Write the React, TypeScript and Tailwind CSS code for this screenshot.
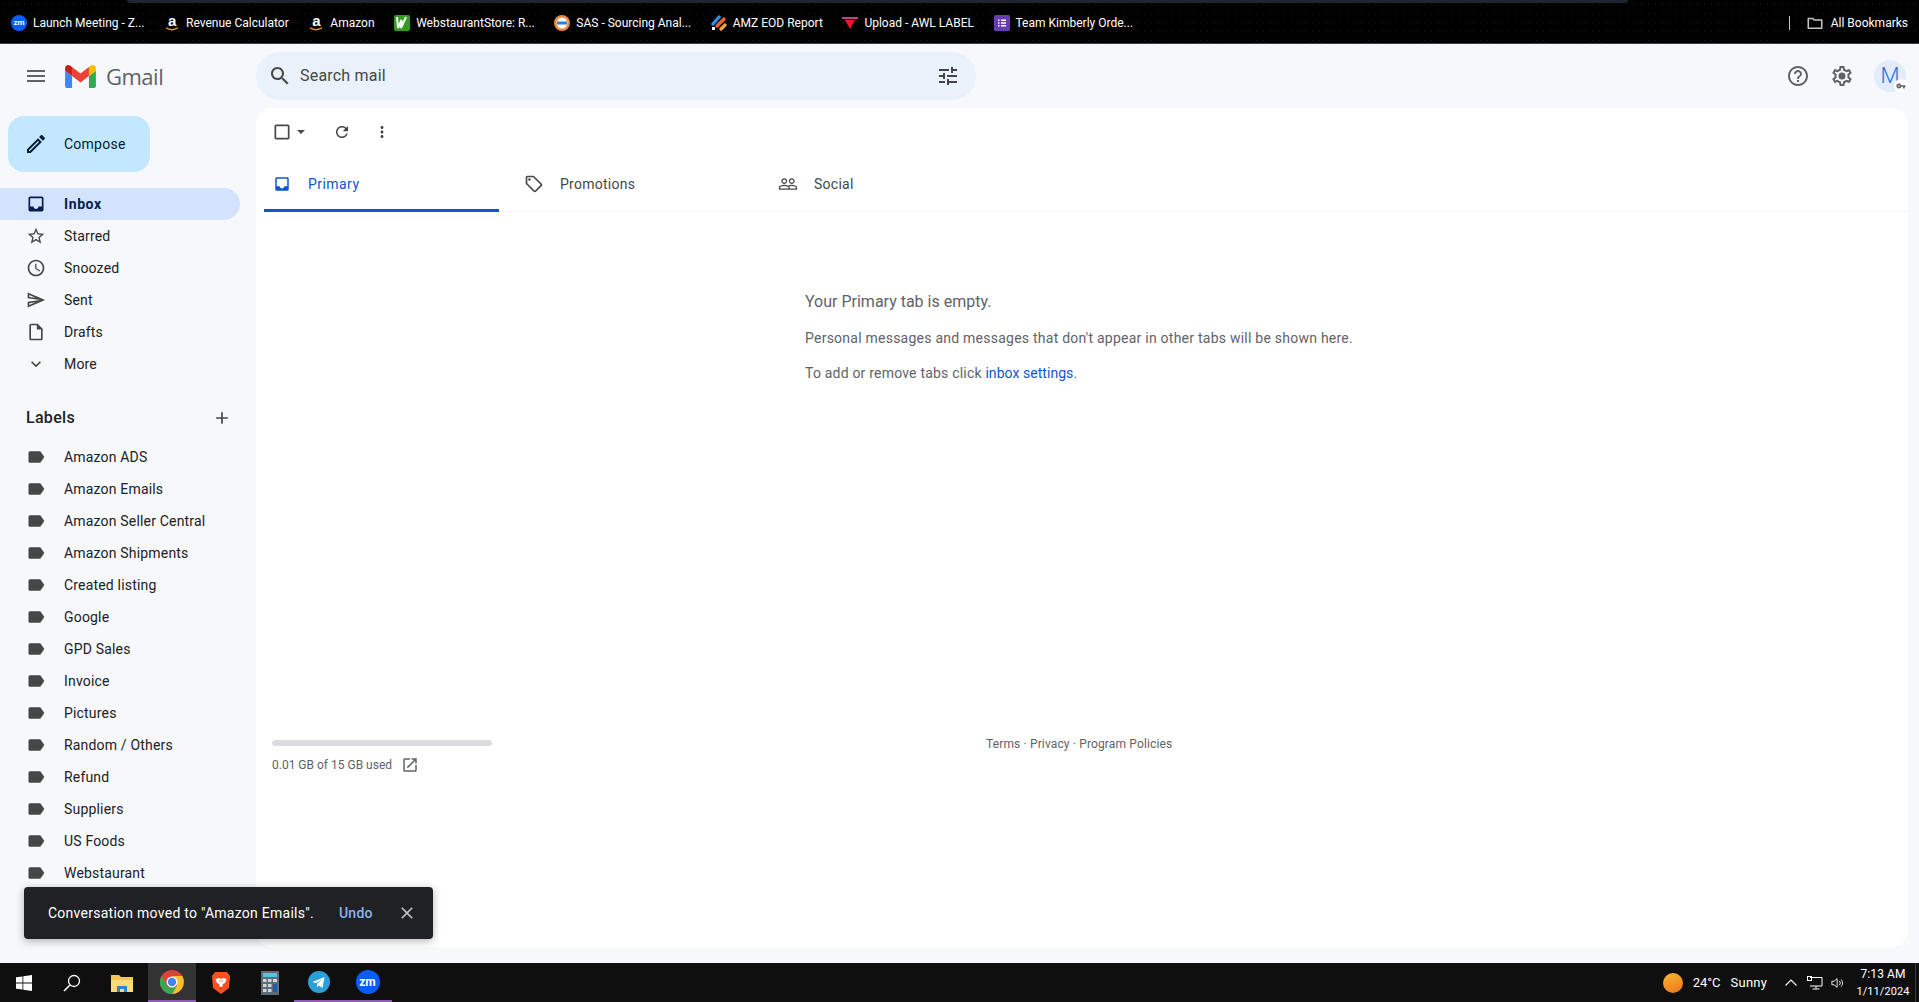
import React from "react";

const ICONS = {
  inbox: "M19 3H5c-1.1 0-2 .9-2 2v14c0 1.1.9 2 2 2h14c1.1 0 2-.9 2-2V5c0-1.1-.9-2-2-2zm0 12h-4c0 1.66-1.35 3-3 3s-3-1.34-3-3H5V5h14v10z",
  star: "M22 9.24l-7.19-.62L12 2 9.19 8.63 2 9.24l5.46 4.73L5.82 21 12 17.27 18.18 21l-1.63-7.03L22 9.24zM12 15.4l-3.76 2.27 1-4.28-3.32-2.88 4.38-.38L12 6.1l1.71 4.04 4.38.38-3.32 2.88 1 4.28L12 15.4z",
  clock: "M11.99 2C6.47 2 2 6.48 2 12s4.47 10 9.99 10C17.52 22 22 17.52 22 12S17.52 2 11.99 2zM12 20c-4.42 0-8-3.58-8-8s3.58-8 8-8 8 3.58 8 8-3.58 8-8 8zm.5-13H11v6l5.25 3.15.75-1.23-4.5-2.67z",
  send: "M4.01 6.03l7.51 3.22-7.52-1 .01-2.22m7.5 8.72L4 17.97v-2.22l7.51-1M2.01 3L2 10l15 2-15 2 .01 7L23 12 2.01 3z",
  draft: "M14 2H6c-1.1 0-2 .9-2 2v16c0 1.1.9 2 2 2h12c1.1 0 2-.9 2-2V8l-6-6zm4 18H6V4h7v5h5v11z",
  chevron: "M7.41 8.59 12 13.17l4.59-4.58L18 10l-6 6-6-6z",
  label: "M17.63 5.84C17.27 5.33 16.67 5 16 5L5 5.01C3.9 5.01 3 5.9 3 7v10c0 1.1.9 1.99 2 1.99L16 19c.67 0 1.27-.33 1.63-.84L22 12l-4.37-6.16z",
  search: "M15.5 14h-.79l-.28-.27C15.41 12.59 16 11.11 16 9.5 16 5.91 13.09 3 9.5 3S3 5.91 3 9.5 5.91 16 9.5 16c1.61 0 3.09-.59 4.23-1.57l.27.28v.79l5 4.99L20.49 19l-4.99-5zm-6 0C7.01 14 5 11.99 5 9.5S7.01 5 9.5 5 14 7.01 14 9.5 11.99 14 9.5 14z",
  tune: "M3 17v2h6v-2H3zM3 5v2h10V5H3zm10 16v-2h8v-2h-8v-2h-2v6h2zM7 9v2H3v2h4v2h2V9H7zm14 4v-2H11v2h10zm-6-4h2V7h4V5h-4V3h-2v6z",
  help: "M11 18h2v-2h-2v2zm1-16C6.48 2 2 6.48 2 12s4.48 10 10 10 10-4.48 10-10S17.52 2 12 2zm0 18c-4.41 0-8-3.59-8-8s3.59-8 8-8 8 3.59 8 8-3.59 8-8 8zm0-14c-2.21 0-4 1.79-4 4h2c0-1.1.9-2 2-2s2 .9 2 2c0 2-3 1.75-3 5h2c0-2.25 3-2.5 3-5 0-2.21-1.79-4-4-4z",
  settings: "M19.43 12.98c.04-.32.07-.64.07-.98 0-.34-.03-.66-.07-.98l2.11-1.65c.19-.15.24-.42.12-.64l-2-3.46c-.09-.16-.26-.25-.44-.25-.06 0-.12.01-.17.03l-2.49 1c-.52-.4-1.08-.73-1.69-.98l-.38-2.65C14.46 2.18 14.25 2 14 2h-4c-.25 0-.46.18-.49.42l-.38 2.65c-.61.25-1.17.59-1.69.98l-2.49-1c-.06-.02-.12-.03-.18-.03-.17 0-.34.09-.43.25l-2 3.46c-.13.22-.07.49.12.64l2.11 1.65c-.04.32-.07.65-.07.98 0 .33.03.66.07.98l-2.11 1.65c-.19.15-.24.42-.12.64l2 3.46c.09.16.26.25.44.25.06 0 .12-.01.17-.03l2.49-1c.52.4 1.08.73 1.69.98l.38 2.65c.03.24.24.42.49.42h4c.25 0 .46-.18.49-.42l.38-2.65c.61-.25 1.17-.59 1.69-.98l2.49 1c.06.02.12.03.18.03.17 0 .34-.09.43-.25l2-3.46c.12-.22.07-.49-.12-.64l-2.11-1.65zm-1.98-1.71c.04.31.05.52.05.73 0 .21-.02.43-.05.73l-.14 1.13.89.7 1.08.84-.7 1.21-1.27-.51-1.04-.42-.9.68c-.43.32-.84.56-1.25.73l-1.06.43-.16 1.13-.2 1.35h-1.4l-.19-1.35-.16-1.13-1.06-.43c-.43-.18-.83-.41-1.23-.71l-.91-.7-1.06.43-1.27.51-.7-1.21 1.08-.84.89-.7-.14-1.13c-.03-.31-.05-.54-.05-.74s.02-.43.05-.73l.14-1.13-.89-.7-1.08-.84.7-1.21 1.27.51 1.04.42.9-.68c.43-.32.84-.56 1.25-.73l1.06-.43.16-1.13.2-1.35h1.39l.19 1.35.16 1.13 1.06.43c.43.18.83.41 1.23.71l.91.7 1.06-.43 1.27-.51.7 1.21-1.07.85-.89.7.14 1.13zM12 8.5a3.5 3.5 0 1 0 0 7 3.5 3.5 0 0 0 0-7z",
  refresh: "M17.65 6.35C16.2 4.9 14.21 4 12 4c-4.42 0-7.99 3.58-7.99 8s3.57 8 7.99 8c3.73 0 6.84-2.55 7.73-6h-2.08c-.82 2.33-3.04 4-5.65 4-3.31 0-6-2.69-6-6s2.69-6 6-6c1.66 0 3.14.69 4.22 1.78L13 11h7V4l-2.35 2.35z",
  tag: "M21.41 11.58l-9-9C12.05 2.22 11.55 2 11 2H4c-1.1 0-2 .9-2 2v7c0 .55.22 1.05.59 1.42l9 9c.36.36.86.58 1.41.58.55 0 1.05-.22 1.41-.59l7-7c.37-.36.59-.86.59-1.41 0-.55-.23-1.06-.59-1.42zM13 20.01L4 11V4h7v-.01l9 9-7 7.02zM6.5 5a1.5 1.5 0 1 0 0 3 1.5 1.5 0 0 0 0-3z",
  people: "M16.5 13c-1.2 0-3.07.34-4.5 1-1.43-.67-3.3-1-4.5-1C5.33 13 1 14.08 1 16.25V19h22v-2.75c0-2.17-4.33-3.25-6.5-3.25zm-4 4.5h-10v-1.25c0-.54 2.56-1.75 5-1.75s5 1.21 5 1.75v1.25zm9 0H14v-1.25c0-.46-.2-.86-.52-1.22.88-.3 1.96-.53 3.02-.53 2.44 0 5 1.21 5 1.75v1.25zM7.5 12c1.93 0 3.5-1.57 3.5-3.5S9.43 5 7.5 5 4 6.57 4 8.5 5.57 12 7.5 12zm0-5.5c1.1 0 2 .9 2 2s-.9 2-2 2-2-.9-2-2 .9-2 2-2zm9 5.5c1.93 0 3.5-1.57 3.5-3.5S18.43 5 16.5 5 13 6.57 13 8.5s1.57 3.5 3.5 3.5zm0-5.5c1.1 0 2 .9 2 2s-.9 2-2 2-2-.9-2-2 .9-2 2-2z",
  openNew: "M19 19H5V5h7V3H5c-1.11 0-2 .9-2 2v14c0 1.1.89 2 2 2h14c1.1 0 2-.9 2-2v-7h-2v7zM14 3v2h3.59l-9.83 9.83 1.41 1.41L19 6.41V10h2V3h-7z",
  close: "M19 6.41 17.59 5 12 10.59 6.41 5 5 6.41 10.59 12 5 17.59 6.41 19 12 13.41 17.59 19 19 17.59 13.41 12z",
  pencil: "M3 17.25V21h3.75L17.81 9.94l-3.75-3.75L3 17.25zM5.92 19H5v-.92l9.06-9.06.92.92L5.92 19zM20.71 5.63l-2.34-2.34c-.39-.39-1.02-.39-1.41 0l-1.83 1.83 3.75 3.75 1.83-1.83c.39-.39.39-1.02 0-1.41z",
  menu: "M3 18h18v-2H3v2zm0-5h18v-2H3v2zm0-7v2h18V6H3z",
  plus: "M19 13h-6v6h-2v-6H5v-2h6V5h2v6h6v2z",
  checkbox: "M19 5v14H5V5h14m0-2H5c-1.1 0-2 .9-2 2v14c0 1.1.9 2 2 2h14c1.1 0 2-.9 2-2V5c0-1.1-.9-2-2-2z",
  more: "M12 8c1.1 0 2-.9 2-2s-.9-2-2-2-2 .9-2 2 .9 2 2 2zm0 2c-1.1 0-2 .9-2 2s.9 2 2 2 2-.9 2-2-.9-2-2-2zm0 6c-1.1 0-2 .9-2 2s.9 2 2 2 2-.9 2-2-.9-2-2-2z",
  key: "M12.65 10C11.83 7.67 9.61 6 7 6c-3.31 0-6 2.69-6 6s2.69 6 6 6c2.61 0 4.83-1.67 5.65-4H17v4h4v-4h2v-4H12.65zM7 14c-1.1 0-2-.9-2-2s.9-2 2-2 2 .9 2 2-.9 2-2 2z",
};

function Icon({ name, className }: { name: keyof typeof ICONS; className: string }) {
  return (
    <svg viewBox="0 0 24 24" fill="currentColor" className={`shrink-0 ${className}`}>
      <path d={ICONS[name]} />
    </svg>
  );
}

function ZoomBadge({ className }: { className: string }) {
  return (
    <div className={`flex shrink-0 items-center justify-center rounded-full bg-[#0b5cff] font-bold text-white ${className}`}>
      zm
    </div>
  );
}

function AmazonIcon() {
  return (
    <div className="flex h-4 w-4 shrink-0 flex-col items-center">
      <span className="font-['Liberation_Sans',sans-serif] text-[15px] font-bold leading-[12px] text-white">a</span>
      <svg viewBox="0 0 14 4" className="h-1 w-[14px]">
        <path d="M1 0.8c3.5 2.6 8.5 2.6 12 0" stroke="#f90" strokeWidth="1.3" fill="none" />
      </svg>
    </div>
  );
}

const BOOKMARKS = [
  { label: "Launch Meeting - Z...", icon: <ZoomBadge className="h-4 w-4 text-[8px]" /> },
  { label: "Revenue Calculator", icon: <AmazonIcon /> },
  { label: "Amazon", icon: <AmazonIcon /> },
  {
    label: "WebstaurantStore: R...",
    icon: (
      <svg viewBox="0 0 16 16" className="h-4 w-4 shrink-0">
        <rect width="16" height="16" rx="2" fill="#2f9e1f" />
        <path d="M3 2l1 11 3.5-8L7 13l5-11" stroke="#fff" strokeWidth="2" fill="none" />
      </svg>
    ),
  },
  {
    label: "SAS - Sourcing Anal...",
    icon: (
      <svg viewBox="0 0 16 16" className="h-4 w-4 shrink-0">
        <circle cx="8" cy="8" r="8" fill="#f0883a" />
        <circle cx="8" cy="8" r="5.5" fill="#fff" />
        <rect x="3" y="6.5" width="10" height="3" fill="#2f80d0" />
      </svg>
    ),
  },
  {
    label: "AMZ EOD Report",
    icon: (
      <svg viewBox="0 0 16 16" className="h-4 w-4 shrink-0">
        <path d="M2 9l6-7" stroke="#2e8bf0" strokeWidth="3.4" strokeLinecap="round" />
        <path d="M6 11l7-7" stroke="#f4622a" strokeWidth="3.4" strokeLinecap="round" />
        <path d="M10 14l4-4" stroke="#f7a823" strokeWidth="3.2" strokeLinecap="round" />
        <path d="M1 12h3v3H1z" fill="#fff" />
      </svg>
    ),
  },
  {
    label: "Upload - AWL LABEL",
    icon: (
      <svg viewBox="0 0 16 16" className="h-4 w-4 shrink-0">
        <rect y="2" width="16" height="2" fill="#b8478a" />
        <path d="M3 5h10l-5 9z" fill="#f0142f" />
      </svg>
    ),
  },
  {
    label: "Team Kimberly Orde...",
    icon: (
      <svg viewBox="0 0 16 16" className="h-4 w-4 shrink-0">
        <rect width="16" height="16" rx="1.5" fill="#673ab7" />
        <path d="M4 4.5h1.5V6H4zM7 4.5h5V6H7zM4 7.3h1.5v1.5H4zM7 7.3h5v1.5H7zM4 10h1.5v1.5H4zM7 10h5v1.5H7z" fill="#fff" />
      </svg>
    ),
  },
];

const NAV: { label: string; icon: keyof typeof ICONS }[] = [
  { label: "Starred", icon: "star" },
  { label: "Snoozed", icon: "clock" },
  { label: "Sent", icon: "send" },
  { label: "Drafts", icon: "draft" },
  { label: "More", icon: "chevron" },
];

const LABELS = [
  "Amazon ADS",
  "Amazon Emails",
  "Amazon Seller Central",
  "Amazon Shipments",
  "Created listing",
  "Google",
  "GPD Sales",
  "Invoice",
  "Pictures",
  "Random / Others",
  "Refund",
  "Suppliers",
  "US Foods",
  "Webstaurant",
];

function BookmarksBar() {
  return (
    <div className="h-[44px] shrink-0 border-b border-[#3c4043] bg-black bg-[radial-gradient(#ffffff1c_0.6px,transparent_0.8px)] bg-[length:7px_9px]">
      <div className="ml-[127px] h-[3px] w-[1501px] rounded-b-[3px] bg-[#1f2530]" />
      <div className="flex h-[40px] items-center pl-[11px] pr-[11px] text-[12px] text-white">
        <div className="flex items-center gap-[19.6px]">
          {BOOKMARKS.map((b) => (
            <div key={b.label} className="flex items-center gap-[6px] whitespace-nowrap">
              {b.icon}
              <span>{b.label}</span>
            </div>
          ))}
        </div>
        <div className="ml-auto h-[14px] w-px bg-[#c4c7c5]" />
        <svg viewBox="0 0 24 24" className="ml-[16px] mr-[7px] h-[18px] w-[18px] text-[#c4c7c5]" fill="none" stroke="currentColor" strokeWidth="2">
          <path d="M3 6h6l2 2h10v11H3z" strokeLinejoin="round" />
        </svg>
        <span className="whitespace-nowrap">All Bookmarks</span>
      </div>
    </div>
  );
}

function Sidebar() {
  return (
    <aside className="flex w-[256px] shrink-0 flex-col">
      <div className="flex h-[64px] items-center pl-[24px]">
        <Icon name="menu" className="h-6 w-6 text-[#5f6368]" />
        <svg viewBox="0 0 75 56" className="ml-[17px] h-[23px] w-[31px]">
          <path fill="#4285f4" d="M5 56h12V27L0 14v37c0 2.8 2.2 5 5 5z" />
          <path fill="#34a853" d="M58 56h12c2.8 0 5-2.2 5-5V14L58 27z" />
          <path fill="#fbbc04" d="M58 5v22l17-13V7.5C75 1.3 68 -2.2 63 1.5z" />
          <path fill="#ea4335" d="M17 27V5l20.5 15.5L58 5v22L37.5 42.5z" />
          <path fill="#c5221f" d="M0 7.5V14l17 13V5l-5-3.5C7 -2.2 0 1.3 0 7.5z" />
        </svg>
        <span className="ml-[10px] font-['Open_Sans',sans-serif] text-[22px] leading-none tracking-[-0.5px] text-[#5f6368]">Gmail</span>
      </div>
      <div className="mt-[8px] ml-[8px] flex h-[56px] w-[142px] items-center rounded-2xl bg-[#c2e7ff] pl-[16px] text-sm tracking-[0.25px] text-[#001d35]">
        <Icon name="pencil" className="h-6 w-6" />
        <span className="ml-[16px]">Compose</span>
      </div>
      <nav className="mt-[16px] flex flex-col">
        <div className="flex h-[32px] w-[240px] items-center rounded-r-full bg-[#d3e3fd] pl-[26px] text-sm font-bold tracking-[0.6px] text-[#041e49]">
          <Icon name="inbox" className="h-[20px] w-[20px]" />
          <span className="ml-[18px]">Inbox</span>
        </div>
        {NAV.map((n) => (
          <div key={n.label} className="flex h-[32px] items-center pl-[26px] text-sm tracking-[0.18px] text-[#202124]">
            <Icon name={n.icon} className="h-[20px] w-[20px] text-[#444746]" />
            <span className="ml-[18px]">{n.label}</span>
          </div>
        ))}
      </nav>
      <div className="mt-[19px] flex h-[38px] items-center justify-between pl-[26px] pr-[24px] text-base font-medium tracking-[0.3px] text-[#202124]">
        <span>Labels</span>
        <Icon name="plus" className="h-[20px] w-[20px] text-[#444746]" />
      </div>
      <div className="mt-[4px] flex flex-col">
        {LABELS.map((l) => (
          <div key={l} className="flex h-[32px] items-center pl-[26px] text-sm tracking-[0.18px] text-[#202124]">
            <Icon name="label" className="h-[20px] w-[20px] text-[#444746]" />
            <span className="ml-[18px] whitespace-nowrap">{l}</span>
          </div>
        ))}
      </div>
    </aside>
  );
}

function MainPanel() {
  return (
    <div className="flex min-w-0 flex-1 flex-col">
      <header className="flex h-[64px] shrink-0 items-center">
        <div className="flex h-[48px] w-[720px] items-center rounded-full bg-[#e9f1fb] pl-[12px] pr-[16px]">
          <Icon name="search" className="h-6 w-6 text-[#444746]" />
          <span className="ml-[8px] text-base tracking-[0.2px] text-[#444746]">Search mail</span>
          <Icon name="tune" className="ml-auto h-6 w-6 text-[#444746]" />
        </div>
        <div className="ml-auto flex items-center pr-[13px]">
          <Icon name="help" className="h-6 w-6 text-[#5f6368]" />
          <Icon name="settings" className="ml-[20px] h-6 w-6 text-[#5f6368]" />
          <div className="relative ml-[20px] flex h-[32px] w-[32px] items-center justify-center rounded-full bg-[#e3ecfa] text-[22px] font-light leading-none text-[#1a73e8]">
            M
            <div className="absolute -bottom-[1px] -right-[2px] flex h-[14px] w-[14px] items-center justify-center rounded-full bg-white">
              <Icon name="key" className="h-[10px] w-[10px] text-[#5f6368]" />
            </div>
          </div>
        </div>
      </header>

      <div className="mr-[11px] flex flex-1 flex-col rounded-2xl bg-white">
        <div className="flex h-[48px] items-center pl-[16px] text-[#444746]">
          <Icon name="checkbox" className="h-[20px] w-[20px]" />
          <svg viewBox="0 0 10 5" className="ml-[5px] h-[4px] w-[8px]" fill="currentColor"><path d="M0 0h10L5 5z" /></svg>
          <Icon name="refresh" className="ml-[28px] h-[18px] w-[18px]" />
          <Icon name="more" className="ml-[22px] h-[18px] w-[18px]" />
        </div>
        <div className="ml-[8px] flex h-[56px] border-b border-[#f1f3f4]">
          <div className="flex h-[56px] w-[235px] items-center border-b-[3px] border-[#0b57d0] pl-[9px] pt-[3px] text-[#0b57d0]">
            <Icon name="inbox" className="h-[18px] w-[18px]" />
            <span className="ml-[17px] text-sm tracking-[0.45px]">Primary</span>
          </div>
          <div className="flex w-[253px] items-center pl-[25px] text-[#444746]">
            <Icon name="tag" className="h-[20px] w-[20px]" />
            <span className="ml-[16px] text-sm tracking-[0.25px]">Promotions</span>
          </div>
          <div className="flex items-center pl-[26px] text-[#444746]">
            <Icon name="people" className="h-[20px] w-[20px]" />
            <span className="ml-[16px] text-sm tracking-[0.25px]">Social</span>
          </div>
        </div>

        <div className="ml-[549px] mt-[79px] flex flex-col text-sm tracking-[0.24px] text-[#5f6368]">
          <p className="text-[16px] leading-[22px] tracking-normal">Your Primary tab is empty.</p>
          <p className="mt-[15px] leading-[20px]">Personal messages and messages that don't appear in other tabs will be shown here.</p>
          <p className="mt-[15px] leading-[20px]">
            <span className="tracking-[0.2px]">To add or remove tabs click </span>
            <span className="tracking-[0.05px] text-[#1155cc]">inbox settings</span>.
          </p>
        </div>

        <div className="mt-[357px] flex items-start pl-[16px] text-[12px] text-[#5f6368]">
          <div className="flex w-[220px] flex-col">
            <div className="h-[6px] w-[220px] rounded-full bg-[#dadce0]" />
            <div className="mt-[10px] flex items-center whitespace-nowrap">
              0.01 GB of 15 GB used
              <Icon name="openNew" className="ml-[9px] h-[18px] w-[18px]" />
            </div>
          </div>
          <div className="ml-[494px] -mt-[5px] whitespace-nowrap tracking-[0.14px]">Terms · Privacy · Program Policies</div>
        </div>
      </div>
    </div>
  );
}

function Toast() {
  return (
    <div className="absolute left-[24px] top-[887px] flex h-[52px] w-[409px] items-center rounded bg-[#202124] pl-[24px] text-sm tracking-[0.26px] text-white shadow-[0_2px_8px_rgba(0,0,0,0.3)]">
      <span className="whitespace-nowrap">Conversation moved to "Amazon Emails".</span>
      <span className="ml-[25px] font-medium text-[#8ab4f8]">Undo</span>
      <Icon name="close" className="ml-[24px] h-[20px] w-[20px] text-[#bdc1c6]" />
    </div>
  );
}

function Taskbar() {
  return (
    <div className="flex h-[39px] shrink-0 items-center bg-[#0f0f0f] text-[13px] text-white">
      <div className="flex h-full w-[48px] items-center justify-center">
        <svg viewBox="0 0 16 16" className="h-4 w-4" fill="#fff">
          <path d="M0 2.3 6.5 1.4v6.2H0zM7.3 1.3 16 0v7.6H7.3zM0 8.4h6.5v6.2L0 13.7zM7.3 8.4H16V16l-8.7-1.3z" />
        </svg>
      </div>
      <div className="flex h-full w-[48px] items-center justify-center">
        <svg viewBox="0 0 18 18" className="h-[18px] w-[18px]" fill="none" stroke="#fff" strokeWidth="1.3">
          <circle cx="11" cy="7" r="5.5" />
          <path d="M7 11l-6 6" strokeWidth="1.6" />
        </svg>
      </div>
      <div className="flex h-full w-[52px] items-center justify-center">
        <svg viewBox="0 0 22 20" className="h-[20px] w-[22px]">
          <path d="M0 2h8l2 2h12v15H0z" fill="#f4c74f" />
          <path d="M0 7h22v12H0z" fill="#fadb78" />
          <path d="M6 19v-6h10v6h-3v-3H9v3z" fill="#2b86c5" />
        </svg>
      </div>
      <div className="flex h-full w-[48px] items-center justify-center border-b-2 border-[#8e5bb5] bg-[#333333]">
        <svg viewBox="0 0 24 24" className="h-[24px] w-[24px]">
          <circle cx="12" cy="12" r="12" fill="#db4437" />
          <path d="M12 6h10.2A12 12 0 0 1 12 24l5.2-9z" fill="#fbc02d" />
          <path d="M1.6 6A12 12 0 0 0 12 24l5.2-9-5.2 3a6 6 0 0 1-5.2-3z" fill="#34a853" />
          <circle cx="12" cy="12" r="5.5" fill="#fff" />
          <circle cx="12" cy="12" r="4.2" fill="#4285f4" />
        </svg>
      </div>
      <div className="flex h-full w-[50px] items-center justify-center">
        <svg viewBox="0 0 20 24" className="h-[24px] w-[20px]">
          <path d="M4 1h12l3 4-1 12-8 6-8-6L1 5z" fill="#f4511e" />
          <path d="M4.5 8l3.5-1 2 1 2-1 3.5 1-1.5 4-2 1-1 3h-2l-1-3-2-1z" fill="#fff" />
          <path d="M8 10h1.5M10.5 10H12M9 17h2v1.5H9z" stroke="#f4511e" strokeWidth="1" />
        </svg>
      </div>
      <div className="flex h-full w-[48px] items-center justify-center">
        <svg viewBox="0 0 18 24" className="h-[24px] w-[18px]">
          <rect width="18" height="24" rx="1" fill="#5f6b76" />
          <rect x="2" y="2" width="14" height="4" fill="#4fc3e8" />
          <path d="M2 8h3.5v3H2zM7 8h3.5v3H7zM12 8h4v3h-4zM2 13h3.5v3H2zM7 13h3.5v3H7zM2 18h3.5v3H2zM7 18h3.5v3H7z" fill="#cfd8dc" />
          <rect x="12" y="13" width="4" height="8" fill="#1f5fa8" />
        </svg>
      </div>
      <div className="flex h-full w-[49px] items-center justify-center border-b-2 border-[#8e5bb5]">
        <svg viewBox="0 0 22 22" className="h-[22px] w-[22px]">
          <circle cx="11" cy="11" r="11" fill="#2a9fd8" />
          <path d="M4.5 11l12-5-2 11-3.5-2.5-1.8 1.8-.3-3.3 5-4.5-6.2 3.8z" fill="#fff" />
        </svg>
      </div>
      <div className="flex h-full w-[49px] items-center justify-center border-b-2 border-[#8e5bb5]">
        <ZoomBadge className="h-[24px] w-[24px] text-[12px]" />
      </div>

      <div className="ml-auto flex h-full items-center">
        <div className="h-[20px] w-[20px] rounded-full bg-[linear-gradient(160deg,#f7b731,#f0741a)]" />
        <span className="ml-[10px] whitespace-nowrap">24°C</span>
        <span className="ml-[10px] whitespace-nowrap tracking-[0.2px]">Sunny</span>
        <svg viewBox="0 0 12 7" className="ml-[18px] h-[7px] w-[12px]" fill="none" stroke="#fff" strokeWidth="1.1">
          <path d="M0.5 6.5 6 1l5.5 5.5" />
        </svg>
        <svg viewBox="0 0 16 14" className="ml-[10px] h-[14px] w-[16px]" fill="none" stroke="#fff" strokeWidth="1">
          <path d="M3 1.5h12v8.5H3M9 10v2.5M5.5 13h7" />
          <rect x="0.5" y="0.5" width="4" height="4" />
        </svg>
        <svg viewBox="0 0 16 14" className="ml-[8px] h-[14px] w-[14px]" fill="none" stroke="#fff" strokeWidth="1">
          <path d="M1 5v4h2.5L7 12V2L3.5 5z" />
          <path d="M9.5 4.5a3.5 3.5 0 0 1 0 5M11.5 3a6 6 0 0 1 0 8" />
        </svg>
        <div className="ml-[12px] flex w-[52px] flex-col items-center text-[11px] leading-[18px] tracking-[0.1px]">
          <span className="whitespace-nowrap text-[12px]">7:13 AM</span>
          <span className="whitespace-nowrap">1/11/2024</span>
        </div>
        <div className="ml-[6px] mr-[3px] h-full w-px bg-[#3a3a3a]" />
      </div>
    </div>
  );
}

export default function App() {
  return (
    <div className="relative flex h-screen w-full flex-col overflow-hidden bg-[#f6f8fc] font-['Roboto',sans-serif]">
      <BookmarksBar />
      <div className="flex min-h-0 flex-1 pb-[16px]">
        <Sidebar />
        <MainPanel />
      </div>
      <Taskbar />
      <Toast />
    </div>
  );
}
